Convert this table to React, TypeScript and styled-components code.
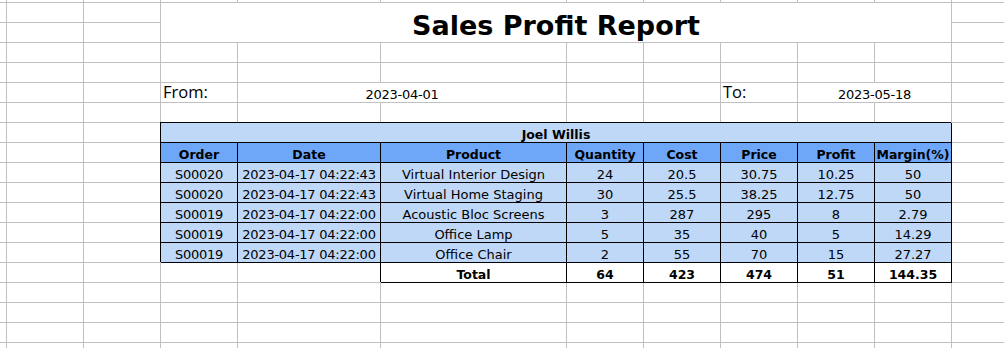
import styled, { createGlobalStyle } from "styled-components";

const GlobalStyle = createGlobalStyle`
  html, body {
    margin: 0;
    padding: 0;
    background: #ffffff;
  }
  body {
    font-family: "DejaVu Sans", "Liberation Sans", sans-serif;
    color: #000000;
  }
`;

const GRID = "#c0c0c0";
const LIGHT = "#bfd8f8";
const HEAD = "#6ea7f7";

const Viewport = styled.div`
  width: 1004px;
  height: 348px;
  overflow: hidden;
`;

const Sheet = styled.div`
  display: grid;
  grid-template-columns: 7px repeat(3, 77px) 143px 186px repeat(6, 77px);
  grid-template-rows: 3px repeat(18, 20px);
  width: max-content;
`;

interface CellProps {
  $span?: number;
  $rows?: number;
  $tight?: boolean;
}

const Cell = styled.div<CellProps>`
  box-sizing: border-box;
  grid-column: span ${(p) => p.$span ?? 1};
  grid-row: span ${(p) => p.$rows ?? 1};
  display: flex;
  align-items: flex-end;
  justify-content: center;
  border-right: 1px solid ${GRID};
  border-bottom: 1px solid ${GRID};
  background: #ffffff;
  font-size: 13px;
  line-height: 1;
  white-space: nowrap;
  letter-spacing: ${(p) => (p.$tight ? "-0.25px" : "normal")};
`;

const TitleCell = styled(Cell)`
  font-size: 27px;
  font-weight: 700;
  padding-bottom: 3px;
`;

const LabelCell = styled(Cell)`
  justify-content: flex-start;
  padding: 0 0 2px 2px;
  font-family: "Open Sans", "Liberation Sans", sans-serif;
  font-size: 16.5px;
`;

const ValueCell = styled(Cell)`
  padding-bottom: 1px;
`;

interface BoxProps {
  $fill?: string;
  $bold?: boolean;
}

const BoxCell = styled(Cell)<BoxProps>`
  padding-bottom: 1px;
  background: ${(p) => p.$fill ?? "#ffffff"};
  border-right-color: #000000;
  border-bottom-color: #000000;
  box-shadow: -1px -1px 0 0 #000000;
  font-size: ${(p) => (p.$bold ? "12.5px" : "13px")};
  font-weight: ${(p) => (p.$bold ? 700 : 400)};
`;

const rows = [
  ["S00020", "2023-04-17 04:22:43", "Virtual Interior Design", "24", "20.5", "30.75", "10.25", "50"],
  ["S00020", "2023-04-17 04:22:43", "Virtual Home Staging", "30", "25.5", "38.25", "12.75", "50"],
  ["S00019", "2023-04-17 04:22:00", "Acoustic Bloc Screens", "3", "287", "295", "8", "2.79"],
  ["S00019", "2023-04-17 04:22:00", "Office Lamp", "5", "35", "40", "5", "14.29"],
  ["S00019", "2023-04-17 04:22:00", "Office Chair", "2", "55", "70", "15", "27.27"],
];

const headers = ["Order", "Date", "Product", "Quantity", "Cost", "Price", "Profit", "Margin(%)"];
const totals = ["64", "423", "474", "51", "144.35"];

const blanks = (key: string, n: number) =>
  Array.from({ length: n }, (_, i) => <Cell key={`${key}-${i}`} />);

const App = () => {
  return (
    <Viewport>
      <GlobalStyle />
      <Sheet>
        {blanks("r0", 12)}

        {blanks("r1", 3)}
        <TitleCell $span={8} $rows={2}>Sales Profit Report</TitleCell>
        <Cell />
        {blanks("r2", 4)}

        {blanks("r3", 12)}
        {blanks("r4", 12)}

        {blanks("r5", 3)}
        <LabelCell>From:</LabelCell>
        <ValueCell $span={2} $tight>2023-04-01</ValueCell>
        <Cell />
        <Cell />
        <LabelCell>To:</LabelCell>
        <ValueCell $span={2} $tight>2023-05-18</ValueCell>
        <Cell />

        {blanks("r6", 12)}

        {blanks("r7", 3)}
        <BoxCell $span={8} $fill={LIGHT} $bold>
          Joel Willis
        </BoxCell>
        <Cell />

        {blanks("r8", 3)}
        {headers.map((h) => (
          <BoxCell key={h} $fill={HEAD} $bold>
            {h}
          </BoxCell>
        ))}
        <Cell />

        {rows.map((row, r) => [
          ...blanks(`d${r}`, 3),
          ...row.map((v, c) => (
            <BoxCell key={`v${r}-${c}`} $fill={LIGHT} $tight={c < 2}>
              {v}
            </BoxCell>
          )),
          <Cell key={`e${r}`} />,
        ])}

        {blanks("t", 5)}
        <BoxCell $bold>Total</BoxCell>
        {totals.map((t, i) => (
          <BoxCell key={`t${i}`} $bold>
            {t}
          </BoxCell>
        ))}
        <Cell />

        {blanks("r15", 12)}
        {blanks("r16", 12)}
        {blanks("r17", 12)}
        {blanks("r18", 12)}
      </Sheet>
    </Viewport>
  );
};

export default App;
